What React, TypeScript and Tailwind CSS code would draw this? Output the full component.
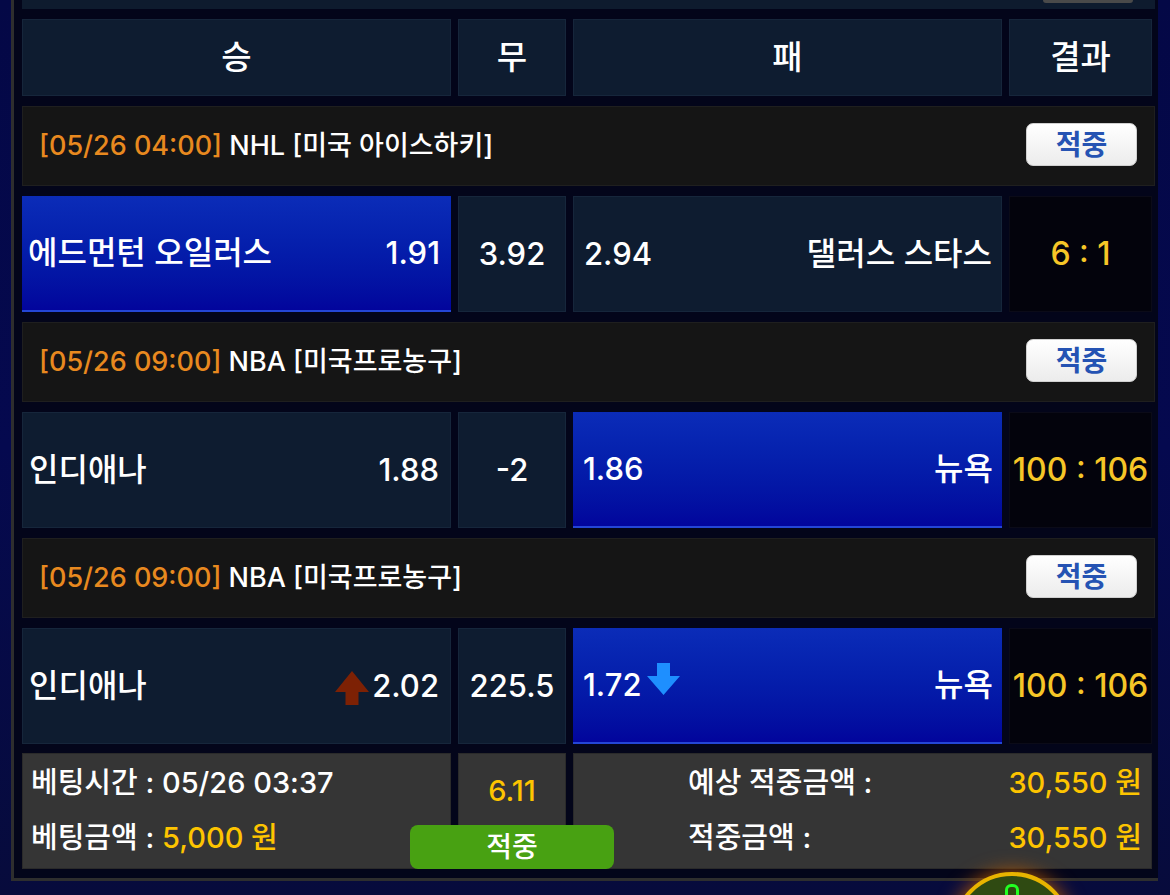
import React from "react";

const FONT = { fontFamily: 'Inter, "Noto Sans CJK KR", sans-serif' };

interface Match {
  time: string;
  league: string;
  home: string;
  homeOdds: string;
  draw: string;
  away: string;
  awayOdds: string;
  score: string;
  pick: "home" | "away";
  homeArrow?: "up";
  awayArrow?: "down";
}

const matches: Match[] = [
  {
    time: "[05/26 04:00]",
    league: "NHL [미국 아이스하키]",
    home: "에드먼턴 오일러스",
    homeOdds: "1.91",
    draw: "3.92",
    away: "댈러스 스타스",
    awayOdds: "2.94",
    score: "6 : 1",
    pick: "home",
  },
  {
    time: "[05/26 09:00]",
    league: "NBA [미국프로농구]",
    home: "인디애나",
    homeOdds: "1.88",
    draw: "-2",
    away: "뉴욕",
    awayOdds: "1.86",
    score: "100 : 106",
    pick: "away",
  },
  {
    time: "[05/26 09:00]",
    league: "NBA [미국프로농구]",
    home: "인디애나",
    homeOdds: "2.02",
    draw: "225.5",
    away: "뉴욕",
    awayOdds: "1.72",
    score: "100 : 106",
    pick: "away",
    homeArrow: "up",
    awayArrow: "down",
  },
];

const cell = "border border-[#16263b] bg-[#0e1c30]";
const picked =
  "border-b-2 border-[#2446d6] bg-gradient-to-b from-[#0b2cb8] to-[#02059c]";

function UpArrow() {
  return (
    <svg width="34" height="34" viewBox="0 0 34 34" className="mr-[3px] mt-[4px]">
      <path d="M17 0 L34 21 L23.5 21 L23.5 34 L10.5 34 L10.5 21 L0 21 Z" fill="#7d2104" />
    </svg>
  );
}

function DownArrow() {
  return (
    <svg width="33" height="32" viewBox="0 0 33 32" className="ml-[5px] -mt-[12px]">
      <path d="M10 0 L23 0 L23 13 L33 13 L16.5 32 L0 13 L10 13 Z" fill="#1e8fff" />
    </svg>
  );
}

function MatchBlock({ m }: { m: Match }) {
  return (
    <>
      <div className="flex h-[80px] items-center justify-between border border-[#1f1f1f] bg-[#151515] pl-[16px] pr-[17px]">
        <div className="text-[27px] text-white">
          <span className="text-[#e8891f]">{m.time}</span> {m.league}
        </div>
        <div className="mb-[3px] flex h-[43px] w-[111px] items-center justify-center rounded-[7px] border border-[#d0d0d0] bg-gradient-to-b from-white to-[#ececec] text-[28px] font-bold text-[#2553b3]">
          적중
        </div>
      </div>
      <div className="grid h-[116px] grid-cols-[429px_108px_429px_143px] gap-x-[7px] text-white">
        <div
          className={`flex items-center justify-between pl-[6px] pr-[11px] ${
            m.pick === "home" ? picked : cell
          }`}
        >
          <span className="text-[32px]">{m.home}</span>
          <span className="flex items-center text-[31px]">
            {m.homeArrow === "up" && <UpArrow />}
            {m.homeOdds}
          </span>
        </div>
        <div className={`flex items-center justify-center text-[31px] ${cell}`}>
          {m.draw}
        </div>
        <div
          className={`flex items-center justify-between pl-[10px] pr-[9px] ${
            m.pick === "away" ? picked : cell
          }`}
        >
          <span className="flex items-center text-[31px]">
            {m.awayOdds}
            {m.awayArrow === "down" && <DownArrow />}
          </span>
          <span className="text-[32px]">{m.away}</span>
        </div>
        <div className="flex items-center justify-center border border-[#0b0b18] bg-[#03030c] text-[32px] text-[#f6c627]">
          {m.score}
        </div>
      </div>
    </>
  );
}

export default function App() {
  return (
    <div
      style={FONT}
      className="relative h-[895px] w-[1170px] overflow-hidden bg-gradient-to-b from-[#040846] via-[#05094f] to-[#070b3c] font-medium"
    >
      <div className="ml-[11px] w-[1147px] border-b-[3px] border-l-[3px] border-[#2e2e2e] bg-[#03051a] pb-[9px] pl-[8px] pr-[3px]">
        <div className="flex flex-col gap-y-[10px]">
          {/* previous row remainder */}
          <div className="relative h-[9px] bg-[#0e1b2e]">
            <div className="absolute right-[22px] top-0 h-[3px] w-[90px] rounded-b-[4px] bg-[#4a4a4a]" />
          </div>

          {/* column heads */}
          <div className="grid h-[77px] grid-cols-[429px_108px_429px_143px] gap-x-[7px] text-[33px] text-white">
            <div className={`flex items-center justify-center ${cell}`}>승</div>
            <div className={`flex items-center justify-center ${cell}`}>무</div>
            <div className={`flex items-center justify-center ${cell}`}>패</div>
            <div className={`flex items-center justify-center ${cell}`}>결과</div>
          </div>

          {matches.map((m, i) => (
            <MatchBlock key={i} m={m} />
          ))}

          {/* bet summary */}
          <div className="relative -mt-[1px] grid h-[116px] grid-cols-[429px_108px_579px] gap-x-[7px] text-[29px] text-white">
            <div className="flex flex-col justify-center gap-y-[12px] border border-[#2a2a2a] bg-[#353535] pb-[2px] pl-[8px]">
              <div>베팅시간 : 05/26 03:37</div>
              <div>
                베팅금액 : <span className="text-[#fdc400]">5,000 원</span>
              </div>
            </div>
            <div className="flex justify-center border border-[#2a2a2a] bg-[#353535] pt-[15px] text-[29px] text-[#fdc400]">
              6.11
            </div>
            <div className="flex flex-col justify-center gap-y-[12px] border border-[#2a2a2a] bg-[#353535] pb-[2px] pl-[114px] pr-[9px]">
              <div className="flex justify-between">
                <span>예상 적중금액 :</span>
                <span className="text-[#fdc400]">30,550 원</span>
              </div>
              <div className="flex justify-between">
                <span>적중금액 :</span>
                <span className="text-[#fdc400]">30,550 원</span>
              </div>
            </div>
            <div className="absolute bottom-0 left-[388px] flex h-[44px] w-[204px] items-center justify-center rounded-[8px] bg-[#48a112] text-[28px] text-white">
              적중
            </div>
          </div>
        </div>
      </div>

      {/* partial round badge below */}
      <div className="absolute left-[952px] top-[872px] h-[120px] w-[120px] rounded-full border-[4px] border-[#e8b400] bg-[#2f4a12] shadow-[0_0_20px_#b85a00]">
        <div className="absolute left-1/2 top-[8px] h-[40px] w-[14px] -translate-x-1/2 rounded-t-[6px] border-[3px] border-[#22ff22]" />
      </div>
    </div>
  );
}
